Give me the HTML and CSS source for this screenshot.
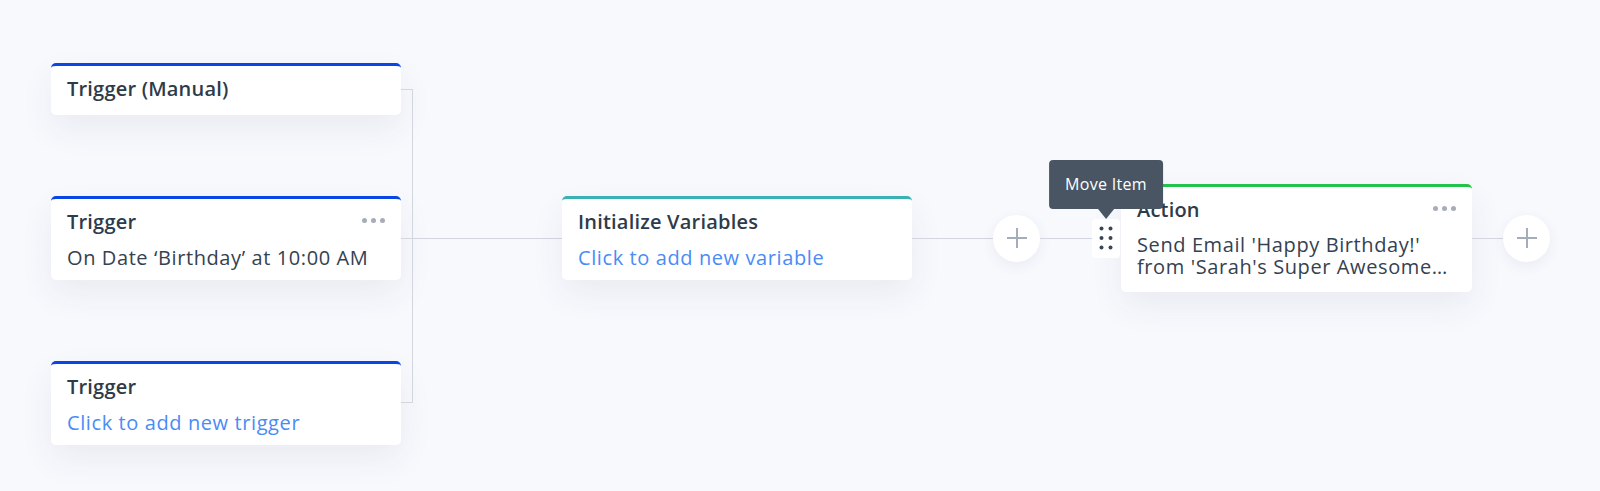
FILE: index.html
```html
<!DOCTYPE html>
<html lang="en">
<head>
<meta charset="utf-8">
<title>Workflow</title>
<link rel="stylesheet" href="styles.css">
</head>
<body>
<div class="canvas">
  <div class="flow">
    <div class="triggers">
      <div class="card card-blue card-single">
        <div class="card-head"><span class="card-title">Trigger (Manual)</span></div>
      </div>
      <div class="card card-blue">
        <div class="card-head"><span class="card-title">Trigger</span><span class="dots"><i></i><i></i><i></i></span></div>
        <div class="card-body">On Date ‘Birthday’ at 10:00 AM</div>
      </div>
      <div class="card card-blue">
        <div class="card-head"><span class="card-title">Trigger</span></div>
        <div class="card-body link">Click to add new trigger</div>
      </div>
    </div>
    <div class="bracket"></div>
    <div class="chain">
      <div class="wire wire-first"></div>
      <div class="card card-teal card-var">
        <div class="card-head"><span class="card-title">Initialize Variables</span></div>
        <div class="card-body link">Click to add new variable</div>
      </div>
      <div class="wire wire-mid"></div>
      <div class="plus"><svg viewBox="0 0 20 20" width="20" height="20"><path d="M10 0v20M0 10h20" stroke="#a5adb9" stroke-width="2" fill="none"/></svg></div>
      <div class="wire wire-short"></div>
      <div class="handle">
        <div class="tooltip">Move Item</div>
        <svg viewBox="0 0 14 24" width="14" height="24"><g fill="#3b4654"><circle cx="2.5" cy="2.5" r="2"/><circle cx="11.5" cy="2.5" r="2"/><circle cx="2.5" cy="12" r="2"/><circle cx="11.5" cy="12" r="2"/><circle cx="2.5" cy="21.5" r="2"/><circle cx="11.5" cy="21.5" r="2"/></g></svg>
      </div>
      <div class="card card-green card-action">
        <div class="card-head"><span class="card-title">Action</span><span class="dots"><i></i><i></i><i></i></span></div>
        <div class="card-body multi">Send Email 'Happy Birthday!'<br>from 'Sarah's Super Awesome…</div>
      </div>
      <div class="wire wire-end"></div>
      <div class="plus"><svg viewBox="0 0 20 20" width="20" height="20"><path d="M10 0v20M0 10h20" stroke="#a5adb9" stroke-width="2" fill="none"/></svg></div>
    </div>
  </div>
</div>
</body>
</html>
```
FILE: styles.css
```css
* { box-sizing: border-box; }
html, body { margin: 0; height: 100%; }
body {
  background: #f8f9fd;
  font-family: "Open Sans", Lato, "Liberation Sans", sans-serif;
  color: #2e3b4a;
}
.canvas { padding: 63px 0 0 51px; }
.flow { display: flex; align-items: flex-start; }
.triggers { display: flex; flex-direction: column; gap: 81px; width: 350px; }
.card {
  background: #fff;
  border-radius: 5px;
  border-top: 3px solid #0a46e6;
  padding: 11px 16px 11px;
  box-shadow: 0 14px 34px rgba(40, 52, 100, 0.07);
}
.card-single { padding-bottom: 14px; }
.card-blue { border-top-color: #0a46e6; }
.card-teal { border-top-color: #3ab2b3; }
.card-green { border-top-color: #22c24b; }
.card-head { display: flex; align-items: center; justify-content: space-between; height: 24px; }
.card-title { font-size: 20px; font-weight: 600; line-height: 24px; letter-spacing: 0.2px; color: #2e3b4a; }
.card-body { margin-top: 13px; font-size: 20px; line-height: 22px; letter-spacing: 0.6px; color: #344151; white-space: nowrap; }
.card-body.link { color: #4a8bf6; }
.card-body.multi { margin-top: 12px; }
.dots { display: flex; gap: 4px; padding-bottom: 4px; }
.dots i { display: block; width: 5px; height: 5px; border-radius: 50%; background: #a6adb8; }
.bracket {
  width: 12px;
  align-self: stretch;
  margin: 26px 0 42px;
  border: 1px solid #d3d6de;
  border-left: none;
}
.chain { display: flex; align-items: center; margin-top: 121px; }
.wire { height: 1px; background: #d3d6de; }
.wire-first { width: 161px; margin-left: -12px; }
.wire-mid { width: 81px; }
.wire-short { width: 52px; }
.wire-end { width: 31px; }
.card-var { width: 350px; }
.card-action { width: 351px; margin-left: 1px; padding-bottom: 14px; }
.plus {
  width: 47px; height: 47px; border-radius: 50%;
  background: #fff;
  display: flex; align-items: center; justify-content: center;
  box-shadow: 0 4px 14px rgba(40, 52, 100, 0.07);
}
.handle {
  position: relative;
  width: 28px; height: 39px;
  background: #fff;
  border-radius: 4px;
  display: flex; align-items: center; justify-content: center;
}
.tooltip {
  position: absolute;
  bottom: calc(100% + 10px);
  left: 50%;
  transform: translateX(-50%);
  background: #4a5563;
  color: #fff;
  font-size: 16px;
  line-height: 19px;
  letter-spacing: 0.3px;
  padding: 15px 16px;
  border-radius: 4px;
  white-space: nowrap;
}
.tooltip::after {
  content: "";
  position: absolute;
  top: 100%;
  left: 50%;
  margin-left: -8px;
  border: 8px solid transparent;
  border-top: 10px solid #4a5563;
  border-bottom: none;
}
```
